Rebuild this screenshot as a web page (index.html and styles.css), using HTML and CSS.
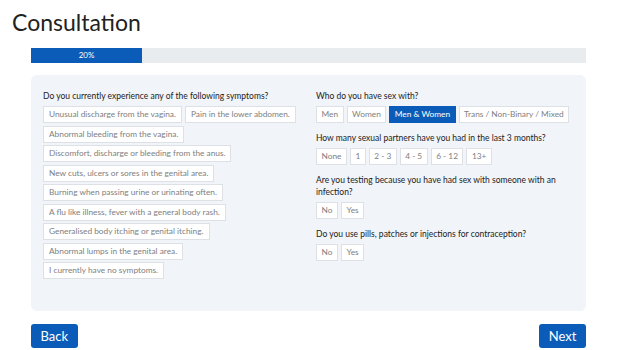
FILE: index.html
```html
<!DOCTYPE html>
<html lang="en">
<head>
    <meta charset="UTF-8">
    <meta name="viewport" content="width=device-width, initial-scale=1.0">
    <title>Consultation</title>
    <link rel="stylesheet" href="styles.css">
</head>
<body>
    <h1 class="page-title">Consultation</h1>

    <div class="wrapper">
        <!-- Progress -->
        <div class="progress">
            <div class="progress-fill" style="width: 20%;">20%</div>
        </div>

        <!-- Questions -->
        <div class="panel">
            <div class="column">
                <div class="group">
                    <p class="question">Do you currently experience any of the following symptoms?</p>
                    <div class="options">
                        <span class="option">Unusual discharge from the vagina.</span>
                        <span class="option">Pain in the lower abdomen.</span>
                        <span class="option">Abnormal bleeding from the vagina.</span>
                        <span class="option">Discomfort, discharge or bleeding from the anus.</span>
                        <span class="option">New cuts, ulcers or sores in the genital area.</span>
                        <span class="option">Burning when passing urine or urinating often.</span>
                        <span class="option">A flu like illness, fever with a general body rash.</span>
                        <span class="option">Generalised body itching or genital itching.</span>
                        <span class="option">Abnormal lumps in the genital area.</span>
                        <span class="option">I currently have no symptoms.</span>
                    </div>
                </div>
            </div>

            <div class="column">
                <div class="group">
                    <p class="question">Who do you have sex with?</p>
                    <div class="options">
                        <span class="option">Men</span>
                        <span class="option">Women</span>
                        <span class="option selected">Men &amp; Women</span>
                        <span class="option">Trans / Non-Binary / Mixed</span>
                    </div>
                </div>

                <div class="group">
                    <p class="question">How many sexual partners have you had in the last 3 months?</p>
                    <div class="options">
                        <span class="option">None</span>
                        <span class="option">1</span>
                        <span class="option">2 - 3</span>
                        <span class="option">4 - 5</span>
                        <span class="option">6 - 12</span>
                        <span class="option">13+</span>
                    </div>
                </div>

                <div class="group">
                    <p class="question">Are you testing because you have had sex with someone with an infection?</p>
                    <div class="options">
                        <span class="option">No</span>
                        <span class="option">Yes</span>
                    </div>
                </div>

                <div class="group">
                    <p class="question">Do you use pills, patches or injections for contraception?</p>
                    <div class="options">
                        <span class="option">No</span>
                        <span class="option">Yes</span>
                    </div>
                </div>
            </div>
        </div>

        <div class="nav-buttons">
            <button class="btn">Back</button>
            <button class="btn">Next</button>
        </div>
    </div>
</body>
</html>
```

FILE: styles.css
```css
body {
    font-family: Lato, "Noto Sans", sans-serif;
    margin: 0;
    background: #fff;
    color: #222;
}

.page-title {
    margin: 0;
    padding: 7px 0 0 12px;
    font-size: 23px;
    font-weight: 400;
    line-height: 30px;
    color: #222;
}

.wrapper {
    width: 555px;
    margin-left: 31px;
}

.progress {
    margin-top: 11px;
    height: 15px;
    background: #e9ecef;
}

.progress-fill {
    height: 100%;
    background: #0a5cb8;
    color: #fff;
    font-size: 8px;
    line-height: 15px;
    text-align: center;
}

.panel {
    margin-top: 12px;
    display: grid;
    grid-template-columns: 258px 258px;
    column-gap: 15px;
    padding: 15px 12px 23px;
    background: #f1f4f8;
    border-radius: 6px;
}

.group {
    margin-bottom: 9px;
}

.question {
    margin: 0 0 4px;
    font-size: 8.5px;
    line-height: 12px;
    font-weight: 400;
    color: #222;
}

.options {
    display: flex;
    flex-wrap: wrap;
    gap: 2.5px 3px;
}

.option {
    height: 17px;
    line-height: 15px;
    padding: 0 5px;
    box-sizing: border-box;
    background: #fff;
    border: 1px solid #dde1e6;
    font-size: 8.3px;
    color: #808080;
    white-space: nowrap;
}

.column:last-child .option {
    padding: 0 4.5px;
}

.option.selected {
    background: #0a5cb8;
    border-color: #0a5cb8;
    color: #fff;
}

.nav-buttons {
    margin-top: 13px;
    display: flex;
    justify-content: space-between;
}

.btn {
    height: 24px;
    padding: 0 9.5px;
    border: none;
    border-radius: 3px;
    background: #0a5cb8;
    color: #fff;
    font-family: Lato, "Noto Sans", sans-serif;
    font-size: 13px;
    cursor: pointer;
}
```
